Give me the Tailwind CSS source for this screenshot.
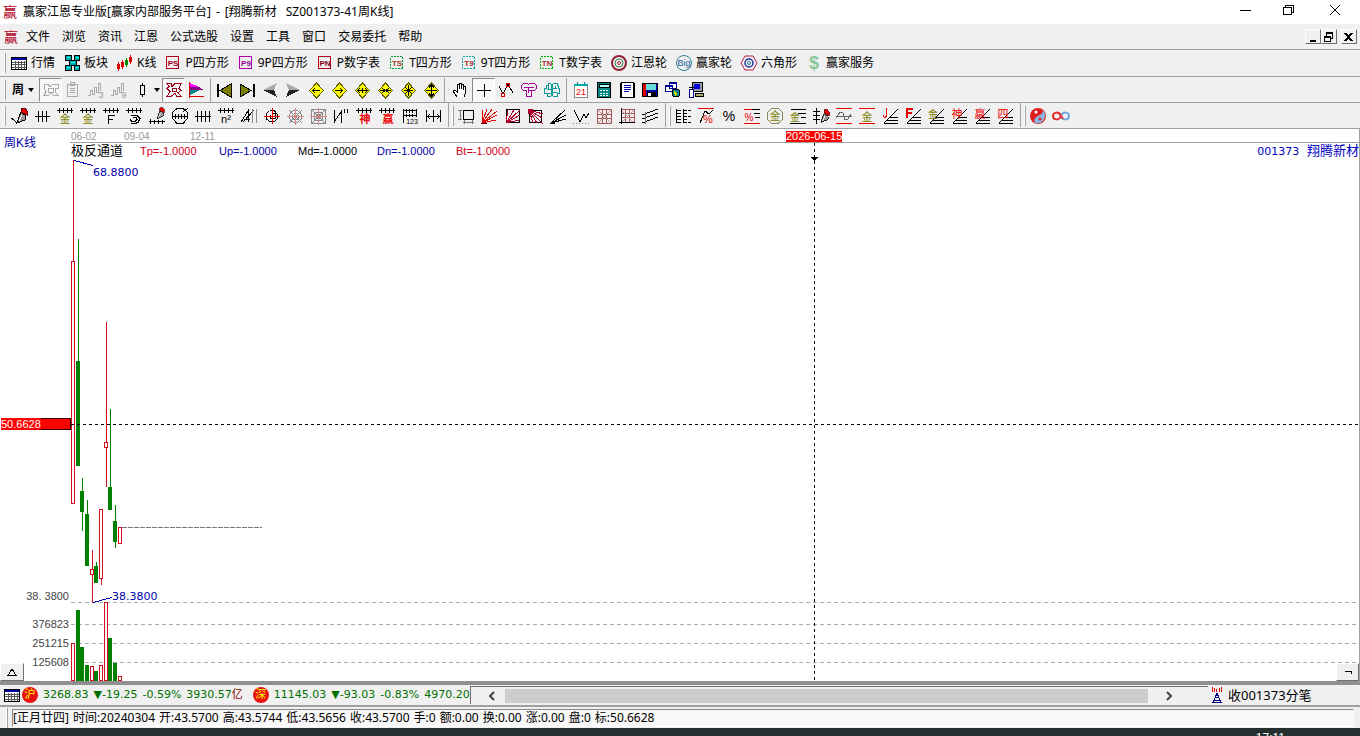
<!DOCTYPE html>
<html lang="zh-CN">
<head>
    <meta charset="UTF-8">
    <meta name="viewport" content="width=device-width, initial-scale=1.0">
    <title>赢家江恩专业版</title>
    <script src="https://cdn.jsdelivr.net/npm/@tailwindcss/browser@4"></script>
    <style>
        body { font-family: 'Liberation Sans', 'Noto Sans CJK SC', sans-serif; }
        .wide { font-family: 'DejaVu Sans', 'Noto Sans CJK SC', sans-serif; }
        .ui { font-family: 'Noto Sans', 'Noto Sans CJK SC', sans-serif; }
        .icon { width: 18px; height: 18px; fill: none; stroke: #000; stroke-width: 1; shape-rendering: crispEdges; flex: none; }
        .icon text { stroke: none; fill: #000; text-anchor: middle; font-family: 'Liberation Sans', 'Noto Sans CJK SC', sans-serif; }
        .raised { border: 1px solid; border-color: #fff #707070 #707070 #fff; }
        .sunken { border: 1px solid; border-color: #8a8a8a #fff #fff #8a8a8a; background: #f8f8f8; }
        .grip { width: 2px; height: 20px; border-left: 1px solid #fff; border-right: 1px solid #a0a0a0; flex: none; }
    </style>
</head>
<body class="h-screen flex flex-col overflow-hidden bg-[#f0f0f0] text-xs text-black">
    <!-- 公用图形 -->
    <svg class="hidden">
        <symbol id="comb" viewBox="0 0 18 18"><path d="M1 3.500h16M3.500 1v5M7.500 1v5M11.500 1v5M15.500 1v5"/></symbol>
        <symbol id="diamond" viewBox="0 0 18 18"><path d="M9.500 2l7 7.500-7 7.500-7-7.500z" fill="#ff0" stroke="#606000"/></symbol>
        <symbol id="steps" viewBox="0 0 18 18"><path d="M3 16.500h14M6 13.500h11M9 10.500h8M3 16L17 2"/></symbol>
        <symbol id="pen" viewBox="0 0 18 18">
            <path d="M11 5l5 4-1 4-8 3 2-6z" fill="#999" stroke="#000"/>
            <path d="M12 8l-3 6" stroke="#fff"/>
            <path d="M11 1h4l2 3v4l-6-3z" fill="#e00" stroke="#600"/>
        </symbol>
        <symbol id="table" viewBox="0 0 18 18">
            <path d="M1.500 3.500h15v12h-15z" fill="#fff"/><path d="M2 4.500h14M2 5.500h14" stroke="#00a"/>
            <path d="M2 8.500h14M2 10.500h14M2 13.500h14M5.500 7v8M8.500 7v8M11.500 7v8M14.500 7v8" stroke="#555"/>
        </symbol>
    </svg>

    <!-- 标题栏 -->
    <header class="h-6 shrink-0 bg-white flex items-center">
        <span class="w-[23px] pl-[3px] text-sm leading-6 text-[#b00020]">赢</span>
        <h1 class="ui flex gap-[5px] whitespace-nowrap leading-6"><span>赢家江恩专业版[赢家内部服务平台]</span><span>-</span><span>[翔腾新材</span><span class="pl-1">SZ001373-41周K线]</span></h1>
        <div class="ml-auto flex h-full">
            <button aria-label="最小化" class="w-[46px] pb-1 flex items-center justify-center"><svg class="icon"><path d="M4 9.500h11"/></svg></button>
            <button aria-label="还原" class="w-[42px] pb-1 flex items-center justify-center"><svg class="icon"><path d="M3.500 6.500h8v7h-8zM5.500 6V4.500h8v7H12"/></svg></button>
            <button aria-label="关闭" class="w-[50px] pb-1 flex items-center justify-center"><svg class="icon" style="shape-rendering:auto"><path d="M4 4l10 10M14 4L4 14"/></svg></button>
        </div>
    </header>

    <!-- 菜单 -->
    <nav class="h-[25px] shrink-0 flex items-center gap-3">
        <span class="w-[14px] ml-1 -mr-1 text-sm text-[#b00020]">赢</span>
        <button>文件</button>
        <button>浏览</button>
        <button>资讯</button>
        <button>江恩</button>
        <button>公式选股</button>
        <button>设置</button>
        <button>工具</button>
        <button>窗口</button>
        <button>交易委托</button>
        <button>帮助</button>
        <div class="ml-auto mr-[3px] flex">
            <button aria-label="最小化子窗口" class="raised w-4 h-[15px] flex items-center justify-center"><svg class="icon"><path d="M6 12.500h6M6 13.500h6"/></svg></button>
            <button aria-label="还原子窗口" class="raised w-4 h-[15px] mr-1 flex items-center justify-center"><svg class="icon"><path d="M4.500 9.500h6v4h-6zM4 8.500h7M6.500 8V5.500h6v5H11M6 4.500h7"/></svg></button>
            <button aria-label="关闭子窗口" class="raised w-4 h-[15px] flex items-center justify-center"><svg class="icon"><path d="M5 5l7 8M12 5l-7 8" stroke-width="2"/></svg></button>
        </div>
    </nav>

    <!-- 功能栏 -->
    <div class="ui h-[27px] shrink-0 border-t border-[#a0a0a0] flex items-center gap-2 leading-4 whitespace-nowrap [&>button]:flex [&>button]:items-center [&>button]:gap-[3px]">
        <span class="grip ml-1 -mr-1"></span>
        <button><svg class="icon"><use href="#table"/></svg>行情</button>
        <button><svg class="icon"><path d="M2.500 1.500h6v5h-6zM11.500 1.500h5v5h-5zM6.500 6.500h7v5h-7zM2.500 11.500h6v5h-6zM11.500 11.500h5v5h-5z" fill="#0aa"/><path d="M4 3.500h3M13 3.500h3M8 8.500h4M4 13.500h3M13 13.500h3" stroke="#0ff"/></svg>板块</button>
        <button><svg class="icon"><path d="M2.500 8v9M1.500 10.500h2v4h-2zM6.500 6v9M5.500 8.500h2v4h-2z" stroke="#d00"/><path d="M10.500 4v9M9.500 6.500h2v4h-2z" stroke="#080"/><path d="M14.500 1v9M13.500 3.500h2v4h-2z" stroke="#d00"/></svg>K线</button>
        <button><svg class="icon"><path d="M2.500 2.500h12v12h-12z" stroke="#b00020"/><text x="9" y="12" font-size="8" font-weight="bold" style="fill:#a00020">PS</text></svg>P四方形</button>
        <button><svg class="icon"><path d="M2.500 2.500h12v12h-12z" stroke="#b000b0"/><text x="9" y="12" font-size="8" font-weight="bold" style="fill:#900090">P9</text></svg>9P四方形</button>
        <button><svg class="icon"><path d="M2.500 2.500h12v12h-12z" stroke="#b00020"/><text x="9" y="12" font-size="8" font-weight="bold" style="fill:#800018">PN</text></svg>P数字表</button>
        <button><svg class="icon"><path d="M2.500 2.500h12v12h-12z" stroke="#00a030" stroke-dasharray="2 1"/><text x="9" y="12" font-size="8" font-weight="bold" style="fill:#a04020">TS</text></svg>T四方形</button>
        <button><svg class="icon"><path d="M2.500 2.500h12v12h-12z" stroke="#00a8a8" stroke-dasharray="2 1"/><text x="9" y="12" font-size="8" font-weight="bold" style="fill:#a03030">T9</text></svg>9T四方形</button>
        <button><svg class="icon"><path d="M2.500 2.500h12v12h-12z" stroke="#00b000" stroke-dasharray="2 1"/><text x="9" y="12" font-size="8" font-weight="bold" style="fill:#a03030">TN</text></svg>T数字表</button>
        <button><svg class="icon" style="shape-rendering:auto"><circle cx="9" cy="9" r="7" stroke="#902030" stroke-width="2"/><circle cx="9" cy="9" r="4" stroke="#308050"/><circle cx="9" cy="9" r="1.500" stroke="#b02030"/></svg>江恩轮</button>
        <button><svg class="icon" style="shape-rendering:auto"><circle cx="9" cy="9" r="7.500" stroke="#308090"/><text x="9" y="12" font-size="9" style="fill:#2060a0">Big</text></svg>赢家轮</button>
        <button><svg class="icon" style="shape-rendering:auto"><path d="M5 2h8l4 7-4 7H5L1 9z" stroke="#b02050"/><circle cx="9" cy="9" r="4" stroke="#2030a0" stroke-width="1.500"/><circle cx="9" cy="9" r="1.500" stroke="#2080a0"/></svg>六角形</button>
        <button><svg class="icon"><text x="9" y="15" font-size="18" font-weight="bold" style="fill:#88c898">$</text></svg>赢家服务</button>
    </div>

    <!-- 周期与翻页 -->
    <div class="h-[26px] pt-px shrink-0 border-t border-[#a0a0a0] flex items-start [&>button]:flex [&>button]:items-center [&>button]:pl-[2px] [&>button]:w-[23px] [&>button]:h-6 [&>i]:w-px [&>i]:h-6 [&>i]:bg-[#a0a0a0]">
        <span class="grip ml-1 mr-1 mt-[2px]"></span>
        <div class="w-[29px] h-6 flex items-center"><button class="pl-[2px] flex items-center gap-1 font-bold">周<svg class="w-[6px] h-1" viewBox="0 0 6 4"><path d="M0 0h6L3 4z"/></svg></button></div>
        <button aria-label="画图" class="sunken"><svg class="icon" style="stroke:#aaa"><path d="M2 3.500h4l2 2 3-2h5v4h-3v3l3 4h-4l-3-2-3 2H2l2-4-2-3zM6 7.500h5v4H6z"/></svg></button>
        <button aria-label="记事"><svg class="icon" style="stroke:#aaa"><path d="M3.500 3.500h10v12h-10zM6.500 1.500h4v3h-4zM6 7.500h5M6 9.500h5M6 11.500h5"/></svg></button>
        <button aria-label="三线"><svg class="icon" style="stroke:#aaa"><path d="M1 14.500h2.500V9h2v4h2V6h2v5h2V2h2v8"/><text x="14" y="17" font-size="9" style="fill:#999">3</text></svg></button>
        <button aria-label="九线"><svg class="icon" style="stroke:#aaa"><path d="M1 14.500h2.500V9h2v4h2V6h2v5h2V2h2v8"/><text x="14" y="17" font-size="9" style="fill:#999">9</text></svg></button>
        <button aria-label="K线样式"><svg class="icon"><path d="M9.500 2v3M9.500 13v3M7.500 4.500h4v9h-4z"/></svg></button>
        <svg class="w-2 h-6" viewBox="0 0 8 24"><path d="M0 10h6L3 14z"/></svg>
        <button aria-label="形态" class="sunken"><svg class="icon" style="stroke:#a00018"><path d="M2 2.500h4l1 3 3-3h6l-2 5 2 2-3 2 3 4h-4l-2-3-4 3H2l3-5-3-3 2-2zM7.500 7.500h4v3h-4z"/></svg></button>
        <button aria-label="筹码"><svg class="icon" style="stroke:none"><path d="M3 2l9 4H3z" fill="#f0f"/><path d="M3 6h9l5 3H3z" fill="#808"/><path d="M3 9h10l-10 5z" fill="#088"/><path d="M2 1h1v16H2zM2 15h15v1H2z" fill="#d00"/></svg></button>
        <i class="mx-[2px]"></i>
        <button aria-label="最前"><svg class="icon"><path d="M2 3.500h1v12H2z" fill="#000"/><path d="M16 3v13L5 9.500z" fill="#808000"/></svg></button>
        <button aria-label="最后"><svg class="icon"><path d="M15 3.500h1v12h-1z" fill="#000"/><path d="M2 3v13l11-6.500z" fill="#808000"/></svg></button>
        <button aria-label="前一个"><svg class="icon" style="stroke:none"><path d="M2 9l14-7-3 7z" fill="#aaa"/><path d="M2 9h11l3 7z" fill="#222"/></svg></button>
        <button aria-label="后一个"><svg class="icon" style="stroke:none"><path d="M16 9L2 2l3 7z" fill="#aaa"/><path d="M16 9H5l-3 7z" fill="#222"/></svg></button>
        <button aria-label="左移"><svg class="icon"><use href="#diamond"/><path d="M5 9.500h8M8 7L5.500 9.500 8 12"/></svg></button>
        <button aria-label="右移"><svg class="icon"><use href="#diamond"/><path d="M5 9.500h8M10 7l2.500 2.500L10 12"/></svg></button>
        <button aria-label="放宽"><svg class="icon"><use href="#diamond"/><path d="M4 9.500h11M9.500 7v5M7 7l-2.500 2.500L7 12M12 7l2.500 2.500L12 12"/></svg></button>
        <button aria-label="缩窄"><svg class="icon"><use href="#diamond"/><path d="M4 9.500h11M6 7l3 2.500L6 12M13 7l-3 2.500 3 2.500"/></svg></button>
        <button aria-label="压缩"><svg class="icon"><use href="#diamond"/><path d="M5 9.500h9M9.500 4v11M6 6l7 7M13 6l-7 7"/></svg></button>
        <button aria-label="拉伸"><svg class="icon"><use href="#diamond"/><path d="M4 9.500h11M9.500 4v11M7 6.500l2.500-2.500L12 6.500M7 12.500L9.500 15l2.500-2.500"/></svg></button>
        <i class="mr-[4px] ml-px"></i>
        <button aria-label="拖动"><svg class="icon"><path d="M6 16l-4-6v-1h2l2 2V4l1-1 1 1v4V2.500h2V8l1-5h1v6l1.500-4h1v6L13 16" fill="#fff"/></svg></button>
        <button aria-label="十字光标" class="sunken"><svg class="icon"><path d="M2 9.500h14M9.500 3v13"/></svg></button>
        <button aria-label="连线"><svg class="icon"><path d="M2 5l4 8 5-10 5 9"/><path d="M4.500 12.500h3v3h-3zM9.500 2.500h3v3h-3z" stroke="#d00"/></svg></button>
        <button aria-label="公式"><svg class="icon" style="stroke:#a000a0"><path d="M1.500 4.500l2-2h4l1 1 1-1h5l2 2v3l-2 2h-3v6h-5v-6h-3l-2-2zM4 6.500h10M8.500 6v6M9 9.500h3"/></svg></button>
        <button aria-label="智能"><svg class="icon" style="stroke:#0a9a9a"><path d="M8.500 3v12M9.500 3v12M8 2.500H5v2H3v3H1.500v5H4v3h4M10 2.500h4v2h1v3h1.500v5H14v3h-4M4 8h4M5 12h3M10 7h4M10 11h4M5 5v3M12 5v2"/></svg></button>
        <i class="mr-[3px] ml-[2px]"></i>
        <button aria-label="日历"><svg class="icon"><path d="M2.500 4.500h13v12h-13z" fill="#fff" stroke="#888"/><path d="M2 3.500h14M2 4.500h14" stroke="#0aa"/><path d="M5.500 1v3M12.500 1v3" stroke="#088"/><text x="9" y="14" font-size="9" style="fill:#e00">21</text></svg></button>
        <button aria-label="计算器"><svg class="icon"><path d="M2.500 1.500h13v15h-13z" fill="#088"/><path d="M4 3h10v3H4z" fill="#aff"/><path d="M5 9.500h8M5 12.500h8M5 14.500h8" stroke="#fff" stroke-dasharray="2 1"/></svg></button>
        <button aria-label="文本"><svg class="icon"><path d="M3.500 1.500h12v15h-12z" fill="#fff"/><path d="M3 2v15M16 2v15" stroke-width="2"/><path d="M6 4.500h7M6 6.500h7M6 8.500h7M6 10.500h5" stroke="#00a"/></svg></button>
        <button aria-label="保存"><svg class="icon"><path d="M1.500 2.500h15v13h-15z" fill="#00a"/><path d="M2 3h3v12H2z" fill="#d00" stroke="none"/><path d="M5 3h10v6H5z" fill="#6dd" stroke="none"/><path d="M6 11h8v4H6z" fill="#000"/><path d="M7 12h3v3H7z" fill="#fff" stroke="none"/></svg></button>
        <button aria-label="联网"><svg class="icon"><path d="M5.500 1.500h7v6h-7zM1.500 4.500h7v6h-7z" fill="#fff" stroke="#008"/><path d="M2 5.500h6M6 2.500h6" stroke="#00a"/><circle cx="12" cy="12" r="4" fill="#088"/><path d="M10 10l4 3-3 2z" fill="#dd0" stroke="none"/></svg></button>
        <button aria-label="终端"><svg class="icon"><path d="M5.500 1.500h10v9h-10z" fill="#999"/><path d="M7 3h6v5H7z" fill="#00d" stroke="none"/><path d="M8.500 12.500h8v3h-8z" fill="#aa6"/><path d="M2.500 8.500h4v8h-4z" fill="#fff" stroke="#008"/><path d="M2 6.500h5"/></svg></button>
    </div>

    <!-- 画线工具 -->
    <div class="h-[26px] shrink-0 border-t border-[#a0a0a0] flex items-start [&>button]:flex [&>button]:items-center [&>button]:pl-[3px] [&>button]:w-[23px] [&>button]:h-[26px] [&>i]:w-px [&>i]:h-6 [&>i]:bg-[#a0a0a0] [&>i]:ml-1 [&>i]:mr-[3px]">
        <span class="grip ml-1 mr-px mt-[3px]"></span>
        <button aria-label="画笔"><svg class="icon"><use href="#pen"/><path d="M1 11l3 2 3 3 2-2"/></svg></button>
        <button aria-label="等分线"><svg class="icon"><path d="M2 9.500h15M5.500 4v11M9.500 4v11M13.500 4v11"/></svg></button>
        <button aria-label="黄金时间"><svg class="icon"><use href="#comb"/><text x="9" y="16" font-size="11" style="fill:#808000">金</text></svg></button>
        <button aria-label="黄金周期"><svg class="icon"><use href="#comb"/><text x="9" y="16" font-size="11" style="fill:#808000">金</text></svg></button>
        <button aria-label="费波周期"><svg class="icon"><use href="#comb"/><path d="M6.500 8v9M6 8.500h7M6 12.500h5"/></svg></button>
        <button aria-label="螺旋周期"><svg class="icon"><use href="#comb"/><path d="M8 10.500h3l1 2-2 2H7l-2-2M6 8.500h6l3 3-2 4-3 1H6"/></svg></button>
        <button aria-label="画笔标尺"><svg class="icon"><svg x="4" y="0" width="13" height="13"><use href="#pen"/></svg><path d="M1 14.500h16M2.500 12v5M6.500 13v4M10.500 13v4M14.500 13v4"/></svg></button>
        <button aria-label="圆周期"><svg class="icon"><path d="M6 1.500h6l4.500 4v6l-4.500 5H6l-4.500-5v-6zM1 9.500h16M4.500 7v5M7.500 7v5M10.500 7v5M13.500 7v5M12 5l5-4"/></svg></button>
        <button aria-label="等距周期"><svg class="icon"><path d="M1 9.500h16M3.500 4v11M7.500 4v11M11.500 4v11M15.500 4v11"/></svg></button>
        <button aria-label="平方周期"><svg class="icon"><use href="#comb"/><text x="9" y="16" font-size="11">n²</text></svg></button>
        <button aria-label="镜像"><svg class="icon"><path d="M1 15L8 4v11M3 15L14 3M4 12h6"/><path d="M12.500 2v14M16.500 2v14" stroke="#888"/></svg></button>
        <button aria-label="螺旋"><svg class="icon"><path d="M7 3.500h4l3.500 4v4l-3 3H7l-4-3V7l3-3M9 6.500h3v5H7V8"/><path d="M1 9.500h16M9.500 1v16" stroke="#e00"/></svg></button>
        <button aria-label="蛛网圆"><svg class="icon" style="stroke:#888"><circle cx="9.500" cy="9.500" r="6"/><circle cx="9.500" cy="9.500" r="3"/><path d="M3 3l13 13M16 3L3 16"/><path d="M9.500 1v17M1 9.500h17" stroke="#d88"/></svg></button>
        <button aria-label="蛛网方"><svg class="icon" style="stroke:#888"><path d="M2.500 2.500h14v14h-14zM5.500 5.500h8v8h-8zM7.500 7.500h4v4h-4zM2 2l15 15M17 2L2 17"/><path d="M1 9.500h17M9.500 1v17" stroke="#d88"/></svg></button>
        <button aria-label="速度线"><svg class="icon"><path d="M2.500 3v13M2 15L9 5M9.500 3v13M12.500 2v4M15.500 2v4"/></svg></button>
        <button aria-label="神奇周期"><svg class="icon"><use href="#comb"/><text x="10" y="16" font-size="11" font-weight="bold" style="fill:#e00">神</text></svg></button>
        <button aria-label="赢家周期"><svg class="icon"><use href="#comb"/><text x="10" y="16" font-size="11" font-weight="bold" style="fill:#e00">赢</text></svg></button>
        <button aria-label="数字标尺"><svg class="icon"><path d="M2.500 2v14M15.500 2v8M2 3.500h14M2 8.500h14M5.500 2v4M8.500 2v4M11.500 2v4M5.500 7v3M8.500 7v3M11.500 7v3"/><text x="11" y="17" font-size="7">123</text></svg></button>
        <button aria-label="区间"><svg class="icon"><path d="M2.500 3v12M16.500 3v12M9.500 3v12M3 9.500h13M6 7L3.500 9.500 6 12M13 7l2.500 2.500L13 12"/></svg></button>
        <i></i><span class="grip mt-[3px]"></span>
        <button aria-label="矩形"><svg class="icon"><path d="M6.500 3.500h10v9h-10z"/><path d="M1 3.500h4M1 12.500h4M3.500 4v8M6 15.500h11M7.500 13v4M15.500 13v4" stroke="#777"/></svg></button>
        <button aria-label="江恩扇形"><svg class="icon" style="stroke:#d00"><path d="M2 16L3 3M2 16L7 2M2 16L12 2M2 16L17 4M2 16l15-8M2 16l14-3"/><path d="M1 16.500h6" stroke="#600"/></svg></button>
        <button aria-label="扇形方框"><svg class="icon"><path d="M3.500 2.500h13v13h-13z"/><path d="M3 16L5 3M3 16L11 3M3 16L17 3M3 16l14-8M3 16l13-3" stroke="#b00030"/></svg></button>
        <button aria-label="下降扇形"><svg class="icon"><path d="M3.500 3.500h12v12h-12z"/><path d="M2 2h5L3 7z" fill="#a00030" stroke="#a00030"/><path d="M3 3l14 14M3 3l13 8M3 3l8 13M3 3l14 4M3 3l4 13" stroke="#b00030"/></svg></button>
        <button aria-label="角度线"><svg class="icon"><path d="M2 16L16 3M2 16l15-8M2 16l15-4M1 16.500h5"/></svg></button>
        <button aria-label="波浪"><svg class="icon"><path d="M2 3l6 12 4-8 2 4 3-5"/><path d="M1 16.500h16" stroke="#777" stroke-dasharray="1 2"/></svg></button>
        <button aria-label="方格"><svg class="icon" style="stroke:#a55"><path d="M2.500 2.500h14v14h-14zM7.500 2v14M11.500 2v14M2 7.500h14M2 11.500h14"/><path d="M2 2l15 15M17 2L2 17" stroke="#b99"/></svg></button>
        <button aria-label="方格坐标"><svg class="icon" style="stroke:#a55"><path d="M3.500 2.500h13v13h-13zM7.500 2v14M11.500 2v14M3 6.500h14M3 10.500h14"/><path d="M3 3l13 13M16 3L3 16" stroke="#b99"/><path d="M3.500 1v16M1 15.500h16" stroke="#000"/></svg></button>
        <button aria-label="平行线"><svg class="icon"><path d="M1 8l16-6M1 12l16-6M1 16l16-6"/><path d="M4.500 5v12" stroke="#777"/></svg></button>
        <i></i><span class="grip mt-[3px]"></span>
        <button aria-label="价格标尺"><svg class="icon"><path d="M2.500 2v14M9.500 2v14M3 3.500h4M3 6.500h4M3 9.500h4M3 12.500h4M3 15.500h4M10 3.500h3M10 6.500h3M10 9.500h3M10 12.500h3M10 15.500h3M14 3.500h3M14 9.500h3M14 15.500h3"/></svg></button>
        <button aria-label="百分比线"><svg class="icon"><path d="M3 16L8 4l4 3 4-4"/><path d="M1 1.500h16" stroke="#e00"/><text x="11" y="16" font-size="11" style="fill:#e00">%</text></svg></button>
        <button aria-label="百分比"><svg class="icon"><text x="9" y="14" font-size="14">%</text></svg></button>
        <button aria-label="百分比分割"><svg class="icon"><path d="M9 2.500h8M11 6.500h6M12 10.500h5" /><path d="M1 2.500h8M1 16.500h16" stroke="#e00"/><text x="6" y="14" font-size="10" style="fill:#e00">%</text></svg></button>
        <button aria-label="黄金圆"><svg class="icon" style="stroke:#8a8a60"><circle cx="9" cy="9" r="8"/><text x="9" y="13" font-size="11" style="fill:#808000">金</text></svg></button>
        <button aria-label="黄金分割"><svg class="icon"><path d="M2 2.500h15M9 6.500h8M12 10.500h5M1 16.500h16"/><text x="6" y="14" font-size="10" style="fill:#808000">金</text></svg></button>
        <button aria-label="标尺画笔"><svg class="icon"><path d="M4.500 1v16M1 4.500h7M1 8.500h7M1 12.500h7"/><svg x="3" y="2" width="15" height="15"><use href="#pen"/></svg></svg></button>
        <button aria-label="波动通道"><svg class="icon"><path d="M1 9.500h16M1 11l4-6 3 1 2 7 3-1 3-5" stroke="#666"/><path d="M1 1.500h16M1 16.500h16" stroke="#e00"/></svg></button>
        <button aria-label="黄金通道"><svg class="icon"><path d="M1 1.500h16M1 16.500h16" stroke="#e00"/><text x="9" y="14" font-size="11" style="fill:#808000">金</text></svg></button>
        <button aria-label="J线"><svg class="icon"><use href="#steps"/><path d="M5.500 1v8l-1 1H3l-1-2" stroke="#e00"/></svg></button>
        <button aria-label="F线"><svg class="icon"><use href="#steps"/><path d="M3 1v10M2 2h7M3 6h5" stroke="#e00" stroke-width="2"/></svg></button>
        <button aria-label="黄金阶梯"><svg class="icon"><use href="#steps"/><text x="6" y="11" font-size="10" style="fill:#808000">金</text></svg></button>
        <button aria-label="神奇阶梯"><svg class="icon"><use href="#steps"/><text x="7" y="11" font-size="11" style="fill:#e00">神</text></svg></button>
        <button aria-label="赢家阶梯"><svg class="icon"><use href="#steps"/><text x="7" y="11" font-size="11" style="fill:#e00">赢</text></svg></button>
        <button aria-label="四方阶梯"><svg class="icon"><use href="#steps"/><text x="7" y="11" font-size="11" style="fill:#e00">四</text></svg></button>
        <i></i><span class="grip mt-[3px]"></span>
        <button aria-label="太极"><svg class="icon" style="shape-rendering:auto;stroke:none"><circle cx="9" cy="9" r="8" fill="#e02020"/><path d="M14 3a8 8 0 0 1-8 13c-2-4 1-6 3-7s5-2 5-6z" fill="#88b8e8"/><circle cx="7" cy="5" r="1.500" fill="#fff"/><circle cx="11" cy="12" r="1.500" fill="#e02020"/></svg></button>
        <button aria-label="无限"><svg class="icon" style="shape-rendering:auto;stroke-width:2"><path d="M9 9c-2-5-8-4-8 0s6 5 8 0" stroke="#e03030"/><path d="M9 9c2-5 8-4 8 0s-6 5-8 0" stroke="#70a8e0"/><path d="M7 6l4 6" stroke="#e03030"/></svg></button>
    </div>

    <!-- K线图 -->
    <main class="flex-1 min-h-0 relative bg-white border-t border-r border-[#a0a0a0]">
        <svg id="chart" class="w-full h-full" shape-rendering="crispEdges" font-size="11">
            <text x="4" y="18" font-size="12" fill="#0000a8">周K线</text>
            <g font-size="10" fill="#999">
                <text x="71" y="11">06-02</text>
                <text x="124" y="11">09-04</text>
                <text x="190" y="11">12-11</text>
            </g>
            <path d="M70 13.500h4000" stroke="#a0a0a0"/>
            <text x="71" y="26" font-size="13">极反通道</text>
            <text x="140" y="26" fill="#d00018">Tp=-1.0000</text>
            <text x="219" y="26" fill="#0000a8">Up=-1.0000</text>
            <text x="298" y="26">Md=-1.0000</text>
            <text x="377" y="26" fill="#0000a8">Dn=-1.0000</text>
            <text x="456" y="26" fill="#d00018">Bt=-1.0000</text>
            <text x="100%" y="26" text-anchor="end" fill="#0000c0" class="wide whitespace-pre">001373 <tspan font-size="13"> 翔腾新材</tspan></text>

            <!-- 刻度 -->
            <g stroke="#aaa" stroke-dasharray="4 3">
                <line x1="71" x2="100%" y1="473.500" y2="473.500"/>
                <line x1="71" x2="100%" y1="495.500" y2="495.500"/>
                <line x1="71" x2="100%" y1="514.500" y2="514.500"/>
                <line x1="71" x2="100%" y1="533.500" y2="533.500"/>
            </g>
            <g fill="#444" text-anchor="end">
                <text x="69" y="471">38. 3800</text>
                <text x="69" y="499">376823</text>
                <text x="69" y="518">251215</text>
                <text x="69" y="537">125608</text>
            </g>
            <g id="bars"></g>
            <path d="M122 398.500h140" stroke="#777" stroke-dasharray="5 1"/>
            <path d="M74 31.500l19 5M93 473.500l19-5" stroke="#0000c0" fill="none"/>
            <g fill="#0000a8" class="wide">
                <text x="93" y="47">68.8800</text>
                <text x="112" y="471">38.3800</text>
            </g>

            <!-- 十字光标 -->
            <line x1="71" x2="100%" y1="295.500" y2="295.500" stroke="#000" stroke-dasharray="3 3"/>
            <path d="M814.500 14v537" stroke="#000" stroke-dasharray="3 3"/>
            <path d="M811 28h7l-3 4h-1z"/>
            <rect x="1" y="289" width="70" height="12" fill="#f00"/>
            <path d="M41 289.500h29.500v11H41" fill="none" stroke="#300"/>
            <text x="1" y="299" fill="#fff">50.6628</text>
            <rect x="786" y="2" width="56" height="11" fill="#f00"/>
            <text x="786" y="11" fill="#fff">2026-06-15</text>
        </svg>
        <button aria-label="展开指标" class="raised absolute left-0 bottom-0 w-6 h-[18px] bg-[#f0f0f0] flex items-center justify-center"><svg class="icon"><path d="M9 6l4 6.500H5z"/></svg></button>
        <button aria-label="收起" class="raised absolute right-0 bottom-0 w-[23px] h-[18px] bg-[#f0f0f0] flex items-center justify-center"><svg class="icon"><path d="M6 8.500h6.500V11"/></svg></button>
    </main>

    <!-- 指数栏 -->
    <footer class="shrink-0">
        <div class="h-1 bg-[#909090]"></div>
        <div class="h-[22px] flex items-center border-b-2 border-[#a0a0a0]">
            <div class="w-[470px] pl-[3px] flex items-center gap-[5px] overflow-hidden whitespace-nowrap text-[11px] leading-4 text-[#007000] wide">
                <svg class="icon -mr-1"><use href="#table"/></svg>
                <span class="w-4 h-4 shrink-0 rounded-full bg-[#e81010] text-[#ff0] text-center">沪</span>
                <span>3268.83</span>
                <span>▼-19.25</span>
                <span>-0.59%</span>
                <span>3930.57<span class="text-[#800000]">亿</span></span>
                <span class="w-4 h-4 ml-[5px] shrink-0 rounded-full bg-[#e81010] text-[#ff0] text-center">深</span>
                <span>11145.03</span>
                <span>▼-93.03</span>
                <span>-0.83%</span>
                <span>4970.20</span>
            </div>
            <div class="flex-1 h-[18px] flex items-center border-t border-l border-[#707070]">
                <button aria-label="向左滚动" class="w-[34px] h-4 pl-2 flex items-center justify-center"><svg class="icon" style="shape-rendering:auto;stroke:#444;stroke-width:2"><path d="M11 5L7 9l4 4"/></svg></button>
                <div class="flex-1 h-[14px] bg-[#cdcdcd]"></div>
                <button aria-label="向右滚动" class="w-[60px] h-4 pl-3 flex items-center"><svg class="icon" style="shape-rendering:auto;stroke:#444;stroke-width:2"><path d="M7 5l4 4-4 4"/></svg></button>
            </div>
            <div class="w-[152px] flex items-center gap-[2px] text-[13px] leading-4 ui">
                <svg class="icon"><path d="M9 7l-4 10M9 7l4 10M7 11.500h4M6 14.500h6M4 16.500h10" stroke="#000080"/><path d="M6.500 2v4M4.500 1v5M11.500 2v4M13.500 1v5M8.500 3v3" stroke="#d00"/></svg>
                <span>收001373分笔</span>
            </div>
        </div>
        <div class="h-[21px] p-[2px] flex items-center">
            <span class="grip mx-1 h-4"></span>
            <div class="sunken ui flex-1 flex gap-1 h-[18px] mr-1 leading-4 whitespace-nowrap">
                <span>[正月廿四]</span>
                <span>时间:20240304</span>
                <span>开:43.5700</span>
                <span>高:43.5744</span>
                <span>低:43.5656</span>
                <span>收:43.5700</span>
                <span>手:0</span>
                <span>额:0.00</span>
                <span>换:0.00</span>
                <span>涨:0.00</span>
                <span>盘:0</span>
                <span>标:50.6628</span>
            </div>
        </div>
        <div class="h-2 overflow-hidden bg-[#24302f] text-right text-white">
            <span class="block pt-[2px] pr-[75px] leading-4">17:11</span>
        </div>
    </footer>

    <script>
        // [x, 红绿, 最高, 实体上, 实体下, 最低, 量柱顶]
        const BARS = [
            [71, 'r', 31, 132, 374, 375, 514],
            [76, 'g', 110, 232, 336, 336, 481],
            [80, 'g', 349, 362, 382, 402, 518],
            [85, 'g', 371, 385, 436, 437, 536],
            [90, 'r', 421, 440, 445, 474, 537],
            [94, 'g', 433, 437, 453, 454, 542],
            [99, 'r', 380, 380, 449, 456, 536],
            [104, 'r', 193, 313, 318, 358, 473],
            [108, 'g', 280, 358, 380, 380, 509],
            [113, 'g', 376, 392, 412, 419, 534],
            [118, 'r', 398, 398, 414, 414, 547]
        ];
        const BOTTOM = 552;

        function box(x, top, bottom, up) {
            return up
                ? `<rect x="${x + 0.5}" y="${top + 0.5}" width="3" height="${bottom - top - 1}" fill="#fff" stroke="#d01020"/>`
                : `<rect x="${x}" y="${top}" width="4" height="${bottom - top}" fill="#008000"/>`;
        }

        document.getElementById('bars').innerHTML = BARS.map(([x, c, high, top, bottom, low, vol]) => {
            const up = c === 'r';
            const color = up ? '#d01020' : '#008000';
            return `<path d="M${x + 2.5} ${high}V${low}" stroke="${color}"/>` + box(x, top, bottom + 1, up) + box(x, vol, BOTTOM, up);
        }).join('');
    </script>
</body>
</html>
